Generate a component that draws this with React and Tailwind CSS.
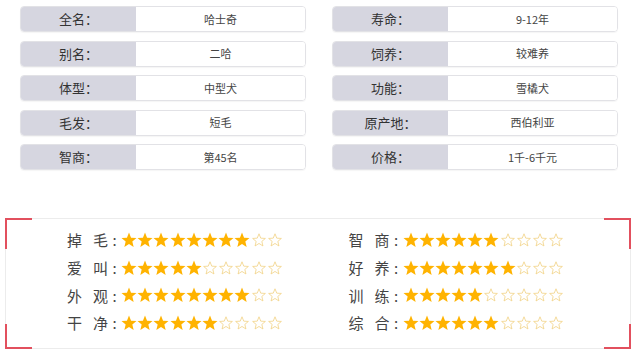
import React from 'react';

// 基本信息（左右两列）
const infoLeft = [
  ['全名：', '哈士奇'],
  ['别名：', '二哈'],
  ['体型：', '中型犬'],
  ['毛发：', '短毛'],
  ['智商：', '第45名'],
];

const infoRight = [
  ['寿命：', '9-12年'],
  ['饲养：', '较难养'],
  ['功能：', '雪橇犬'],
  ['原产地：', '西伯利亚'],
  ['价格：', '1千-6千元'],
];

// 评分（满分10星）
const ratingLeft = [
  ['掉', '毛', 8],
  ['爱', '叫', 5],
  ['外', '观', 8],
  ['干', '净', 6],
];

const ratingRight = [
  ['智', '商', 6],
  ['好', '养', 7],
  ['训', '练', 5],
  ['综', '合', 6],
];

const STAR = 'M8 0.6L10.06 5.7L15.5 6.05L11.33 9.55L12.65 14.9L8 11.95L3.35 14.9L4.67 9.55L0.5 6.05L5.94 5.7Z';

function Star({ filled }) {
  return (
    <svg width="16" height="16" viewBox="0 0 16 16" className="shrink-0">
      {filled ? (
        <path d={STAR} fill="#ffb300" />
      ) : (
        <path d={STAR} fill="none" stroke="#f0d07e" strokeWidth="0.9" strokeLinejoin="round" transform="translate(1.2 1.3) scale(0.85)" />
      )}
    </svg>
  );
}

function InfoRow({ label, value }) {
  return (
    <div className="flex h-[26px] rounded-[4px] border border-[#e2e2e6] overflow-hidden shadow-[0_1px_1px_rgba(0,0,0,0.04)]">
      <div className="w-[115px] shrink-0 bg-[#d6d6e0] flex items-center justify-center text-[13px] text-[#333]">
        {label}
      </div>
      <div className="flex-1 bg-white flex items-center justify-center text-[11px] text-[#444]">
        {value}
      </div>
    </div>
  );
}

function RatingRow({ a, b, n }) {
  return (
    <div className="flex items-center h-[27.7px]">
      <div className="w-[41px] flex justify-between text-[15px] leading-none text-[#444]">
        <span>{a}</span>
        <span>{b}</span>
      </div>
      <span className="w-[13px] text-center text-[15px] leading-none text-[#444]">:</span>
      <div className="flex gap-[0.2px]">
        {Array.from({ length: 10 }).map((_, i) => (
          <Star key={i} filled={i < n} />
        ))}
      </div>
    </div>
  );
}

export default function App() {
  return (
    <div
      className="w-[640px] h-[354px] bg-white overflow-hidden"
      style={{ fontFamily: '"Noto Sans CJK SC", "Noto Sans", sans-serif' }}
    >
      {/* 基本信息 */}
      <div className="flex gap-[26px] pl-[20px] pt-[6px]">
        <div className="w-[286px] flex flex-col gap-[8.5px]">
          {infoLeft.map(([l, v]) => (
            <InfoRow key={l} label={l} value={v} />
          ))}
        </div>
        <div className="w-[286px] flex flex-col gap-[8.5px]">
          {infoRight.map(([l, v]) => (
            <InfoRow key={l} label={l} value={v} />
          ))}
        </div>
      </div>

      {/* 评分框 */}
      <div className="relative mt-[48px] ml-[5px] w-[626px] h-[131px] border border-[#ececec]">
        <span className="absolute -left-px -top-px w-[27px] h-[31px] border-l-2 border-t-2 border-[#e2505e]" />
        <span className="absolute -left-px -bottom-px w-[27px] h-[25px] border-l-2 border-b-2 border-[#e2505e]" />
        <span className="absolute -right-px -top-px w-[27px] h-[31px] border-r-2 border-t-2 border-[#e2505e]" />
        <span className="absolute -right-px -bottom-px w-[27px] h-[25px] border-r-2 border-b-2 border-[#e2505e]" />

        <div className="flex pl-[61px] pt-[7px]">
          <div className="w-[288px] flex flex-col">
            {ratingLeft.map(([a, b, n]) => (
              <RatingRow key={a} a={a} b={b} n={n} />
            ))}
          </div>
          <div className="w-[288px] flex flex-col">
            {ratingRight.map(([a, b, n]) => (
              <RatingRow key={a} a={a} b={b} n={n} />
            ))}
          </div>
        </div>
      </div>
    </div>
  );
}
